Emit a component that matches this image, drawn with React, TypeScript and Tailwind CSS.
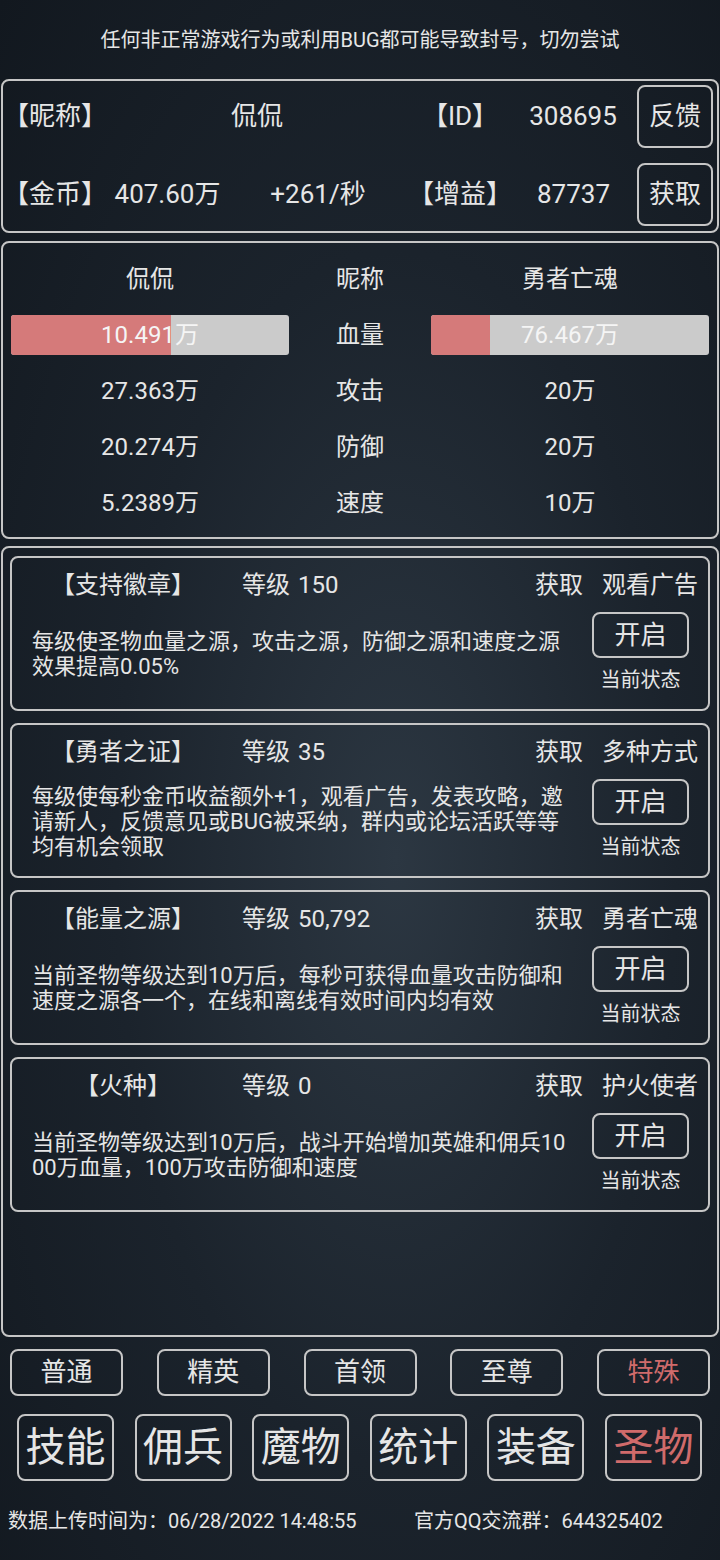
import React from 'react';

// relic cards shown in the lower panel
const RELICS = [
  {
    name: '【支持徽章】',
    level: '150',
    source: '观看广告',
    lines: ['每级使圣物血量之源，攻击之源，防御之源和速度之源', '效果提高0.05%'],
  },
  {
    name: '【勇者之证】',
    level: '35',
    source: '多种方式',
    lines: [
      '每级使每秒金币收益额外+1，观看广告，发表攻略，邀',
      '请新人，反馈意见或BUG被采纳，群内或论坛活跃等等',
      '均有机会领取',
    ],
  },
  {
    name: '【能量之源】',
    level: '50,792',
    source: '勇者亡魂',
    lines: ['当前圣物等级达到10万后，每秒可获得血量攻击防御和', '速度之源各一个，在线和离线有效时间内均有效'],
  },
  {
    name: '【火种】',
    level: '0',
    source: '护火使者',
    lines: ['当前圣物等级达到10万后，战斗开始增加英雄和佣兵10', '00万血量，100万攻击防御和速度'],
  },
];

const STATS = [
  { left: '27.363万', label: '攻击', right: '20万' },
  { left: '20.274万', label: '防御', right: '20万' },
  { left: '5.2389万', label: '速度', right: '10万' },
];

const TIERS = ['普通', '精英', '首领', '至尊', '特殊'];
const TABS = ['技能', '佣兵', '魔物', '统计', '装备', '圣物'];

const HpBar: React.FC<{ value: string; fillClass: string }> = ({ value, fillClass }) => (
  <div className="relative h-[40px] bg-[#cbcbcb] rounded-[3px] overflow-hidden">
    <div className={`h-full bg-[#d57a7a] ${fillClass}`} />
    <div className="absolute inset-0 flex items-center justify-center text-[#f5f5f5]">{value}</div>
  </div>
);

const RelicCard: React.FC<{ relic: (typeof RELICS)[number] }> = ({ relic }) => (
  <div className="h-[155px] border-2 border-[#c6c6c6] rounded-lg flex flex-col">
    <div className="h-[54px] flex items-center text-[24px] whitespace-nowrap">
      <span className="w-[222px] text-center">{relic.name}</span>
      <span className="ml-[8px]">等级</span>
      <span className="ml-[8px]">{relic.level}</span>
      <span className="ml-auto">获取</span>
      <span className="ml-[19px] mr-[10px]">{relic.source}</span>
    </div>
    <div className="h-[84px] flex">
      <div className="flex-1 pl-[20px] flex items-center text-[22px] leading-[25px] whitespace-nowrap">
        <p>
          {relic.lines.map((l, i) => (
            <span key={i} className="block">
              {l}
            </span>
          ))}
        </p>
      </div>
      <div className="w-[97px] mr-[19px] flex flex-col items-center">
        <div className="w-[97px] h-[46px] border-2 border-[#c6c6c6] rounded-lg flex items-center justify-center text-[26px]">
          开启
        </div>
        <div className="mt-[10px] text-[20px] leading-[24px] whitespace-nowrap">当前状态</div>
      </div>
    </div>
  </div>
);

const App: React.FC = () => {
  return (
    <div className="w-[720px] min-h-[1560px] flex flex-col text-[#e6e6e6] font-[Roboto,'Noto_Sans_CJK_SC',sans-serif] bg-[radial-gradient(ellipse_at_55%_55%,#2c3742_0%,#1b232c_50%,#12181f_100%)]">
      <div className="h-[79px] flex items-center justify-center text-[20px]">
        任何非正常游戏行为或利用BUG都可能导致封号，切勿尝试
      </div>

      {/* player info */}
      <div className="mx-[1px] h-[154px] border-2 border-[#c6c6c6] rounded-lg pt-[4px] flex flex-col gap-[15px] text-[26px] whitespace-nowrap">
        <div className="h-[63px] flex items-center">
          <span className="w-[104px]">【昵称】</span>
          <span className="w-[300px] text-center">侃侃</span>
          <span className="w-[106px] text-center">【ID】</span>
          <span className="w-[120px] text-center">308695</span>
          <button className="ml-[4px] w-[76px] h-[63px] border-2 border-[#c6c6c6] rounded-lg">反馈</button>
        </div>
        <div className="h-[63px] flex items-center">
          <span className="w-[104px]">【金币】</span>
          <span className="w-[121px] text-center">407.60万</span>
          <span className="w-[180px] text-center">+261/秒</span>
          <span className="w-[104px] text-center">【增益】</span>
          <span className="w-[123px] text-center">87737</span>
          <button className="ml-[2px] w-[76px] h-[63px] border-2 border-[#c6c6c6] rounded-lg">获取</button>
        </div>
      </div>

      {/* battle comparison */}
      <div className="mx-[1px] mt-[8px] h-[298px] border-2 border-[#c6c6c6] rounded-lg pt-[8px] px-[8px] grid grid-cols-[278px_1fr_278px] auto-rows-[56px] items-center text-center text-[24px]">
        <span>侃侃</span>
        <span>昵称</span>
        <span>勇者亡魂</span>
        <HpBar value="10.491万" fillClass="w-[57.6%]" />
        <span>血量</span>
        <HpBar value="76.467万" fillClass="w-[21.3%]" />
        {STATS.map((s) => (
          <React.Fragment key={s.label}>
            <span>{s.left}</span>
            <span>{s.label}</span>
            <span>{s.right}</span>
          </React.Fragment>
        ))}
      </div>

      {/* relics */}
      <div className="mx-[1px] mt-[7px] h-[791px] border-2 border-[#c6c6c6] rounded-lg px-[7px] pt-[8px] flex flex-col gap-[12px]">
        {RELICS.map((r) => (
          <RelicCard key={r.name} relic={r} />
        ))}
      </div>

      <div className="mt-[12px] px-[10px] flex justify-between">
        {TIERS.map((t, i) => (
          <button
            key={t}
            className={`w-[113px] h-[47px] border-2 border-[#c6c6c6] rounded-lg text-[26px] ${
              i === TIERS.length - 1 ? 'text-[#d06b6b]' : ''
            }`}
          >
            {t}
          </button>
        ))}
      </div>

      <div className="mt-[18px] pl-[17px] pr-[18px] flex justify-between">
        {TABS.map((t, i) => (
          <button
            key={t}
            className={`w-[97px] h-[67px] border-2 border-[#c6c6c6] rounded-lg text-[40px] leading-none ${
              i === TABS.length - 1 ? 'text-[#d06b6b]' : ''
            }`}
          >
            {t}
          </button>
        ))}
      </div>

      <div className="mt-[26px] px-[8px] flex text-[20px] leading-[28px] whitespace-nowrap">
        <span className="w-[406px]">数据上传时间为：06/28/2022 14:48:55</span>
        <span>官方QQ交流群：644325402</span>
      </div>
    </div>
  );
};

export default App;
